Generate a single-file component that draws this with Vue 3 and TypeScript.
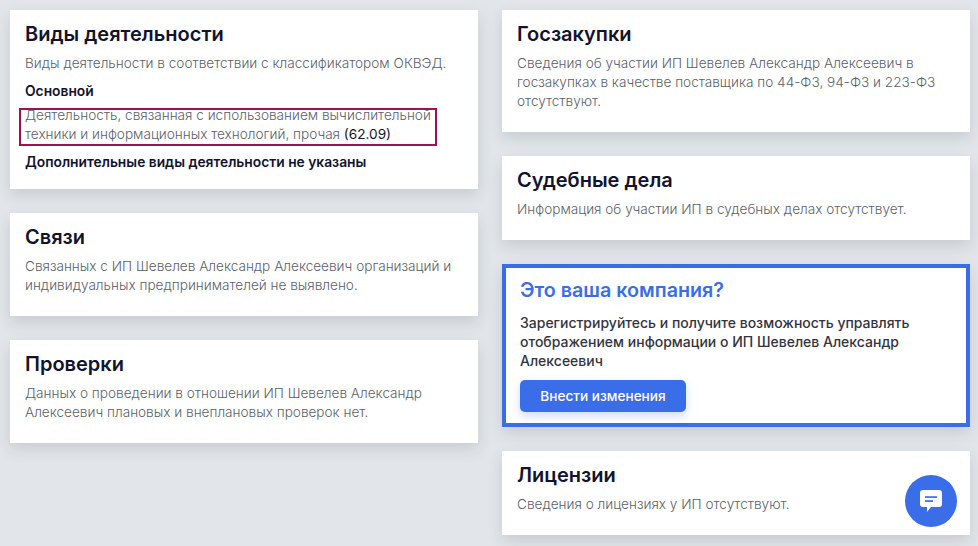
<template>
  <div class="page">
    <div class="col">
      <section class="card first">
        <h2>Виды деятельности</h2>
        <p>Виды деятельности в соответствии с классификатором ОКВЭД.</p>
        <h4>Основной</h4>
        <div class="okved">
          Деятельность, связанная с использованием вычислительной техники и информационных технологий, прочая
          <span class="code">(62.09)</span>
        </div>
        <h4 class="last">Дополнительные виды деятельности не указаны</h4>
      </section>
      <section v-for="c in leftCards" :key="c.title" class="card">
        <h2>{{ c.title }}</h2>
        <p>{{ c.text }}</p>
      </section>
    </div>

    <div class="col">
      <section v-for="c in rightCards" :key="c.title" class="card">
        <h2>{{ c.title }}</h2>
        <p>{{ c.text }}</p>
      </section>
      <section class="card promo">
        <h2>Это ваша компания?</h2>
        <p>Зарегистрируйтесь и получите возможность управлять отображением информации о ИП Шевелев Александр Алексеевич</p>
        <button type="button">Внести изменения</button>
      </section>
      <section class="card">
        <h2>Лицензии</h2>
        <p>Сведения о лицензиях у ИП отсутствуют.</p>
      </section>
    </div>

    <button class="chat" type="button" aria-label="Чат">
      <svg width="22" height="22" viewBox="0 0 22 22">
        <path d="M3 0h16a3 3 0 0 1 3 3v11a3 3 0 0 1-3 3h-8l-4 5v-5H3a3 3 0 0 1-3-3V3a3 3 0 0 1 3-3z" fill="#fff" />
        <rect x="5" y="6.2" width="12" height="1.7" fill="#3a6ee8" />
        <rect x="5" y="10.2" width="8" height="1.7" fill="#3a6ee8" />
      </svg>
    </button>
  </div>
</template>

<script setup lang="ts">
interface Card {
  title: string
  text: string
}

const leftCards: Card[] = [
  {
    title: 'Связи',
    text: 'Связанных с ИП Шевелев Александр Алексеевич организаций и индивидуальных предпринимателей не выявлено.',
  },
  {
    title: 'Проверки',
    text: 'Данных о проведении в отношении ИП Шевелев Александр Алексеевич плановых и внеплановых проверок нет.',
  },
]

const rightCards: Card[] = [
  {
    title: 'Госзакупки',
    text: 'Сведения об участии ИП Шевелев Александр Алексеевич в госзакупках в качестве поставщика по 44-ФЗ, 94-ФЗ и 223-ФЗ отсутствуют.',
  },
  {
    title: 'Судебные дела',
    text: 'Информация об участии ИП в судебных делах отсутствует.',
  },
]
</script>

<style>
html,
body {
  margin: 0;
  background: #e2e6ea;
  overflow: hidden;
}
</style>

<style scoped>
.page {
  display: flex;
  gap: 24px;
  padding: 10px 8px 0 10px;
  height: 536px;
  position: relative;
  font-family: Inter, "Noto Sans", sans-serif;
  color: #5c5f6b;
}

.col {
  width: 468px;
  display: flex;
  flex-direction: column;
  gap: 24px;
}

.card {
  background: #fff;
  padding: 12px 15px 21px;
  box-shadow: 0 6px 14px rgba(60, 70, 90, 0.16);
}

.card.first {
  padding-bottom: 17px;
}

h2 {
  margin: 0 0 8px;
  font-size: 20px;
  line-height: 24px;
  font-weight: 600;
  color: #12132e;
}

p {
  margin: 0;
  font-size: 13.6px;
  line-height: 19px;
  font-weight: 300;
}

h4 {
  margin: 9px 0 5px;
  font-size: 13.8px;
  line-height: 19px;
  font-weight: 600;
  color: #12132e;
}

h4.last {
  margin: 9px 0 0;
}

.okved {
  position: relative;
  font-size: 13.6px;
  line-height: 19px;
  font-weight: 300;
}

.okved::after {
  content: '';
  position: absolute;
  left: -6px;
  top: 2px;
  width: 418px;
  height: 38px;
  box-sizing: border-box;
  border: 2px solid #a0114f;
}

.code {
  color: #12132e;
  font-weight: 400;
}

.promo {
  border: 4px solid #3a6ee8;
  padding: 10px 14px 11px;
}

.promo h2 {
  color: #3a6ee8;
  font-size: 19.7px;
  margin-bottom: 11px;
}

.promo p {
  color: #33343f;
  font-size: 14px;
  font-weight: 500;
}

.promo button {
  margin-top: 10px;
  display: block;
  width: 166px;
  height: 32px;
  border: 0;
  border-radius: 5px;
  background: #3a6ee8;
  color: #fff;
  font: 500 13.6px Inter, "Noto Sans", sans-serif;
  box-shadow: 0 4px 10px rgba(58, 110, 232, 0.25);
}

.chat {
  position: absolute;
  left: 905px;
  top: 475px;
  width: 52px;
  height: 52px;
  padding: 0;
  border: 0;
  border-radius: 50%;
  background: #3a6ee8;
  display: flex;
  align-items: center;
  justify-content: center;
}
</style>
